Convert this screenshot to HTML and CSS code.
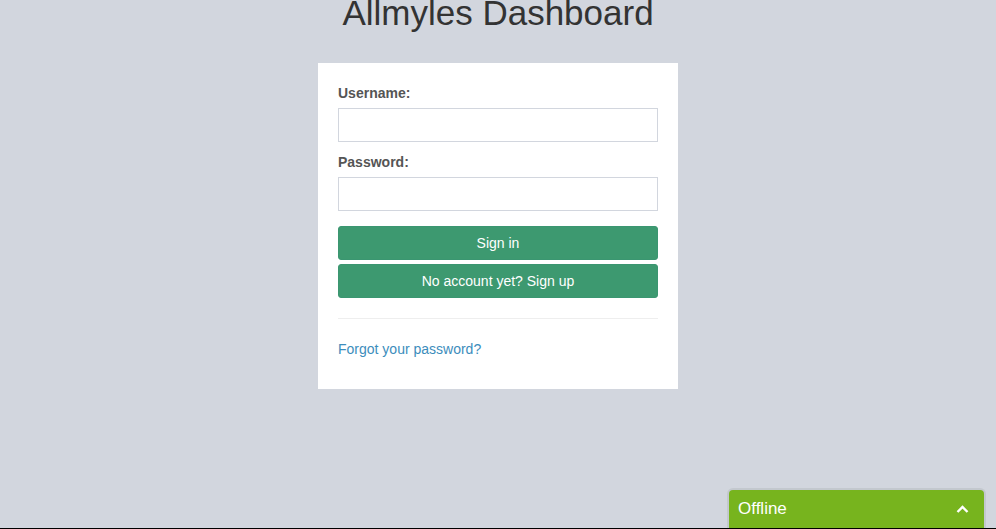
FILE: index.html
```html
<!DOCTYPE html>
<html>
<head lang="en">
  <meta charset="UTF-8">
  <title>Allmyles Dashboard</title>
  <link rel="stylesheet" href="styles.css">
</head>
<body>

<div class="login-box">
  <!-- 标题 -->
  <div class="login-logo">Allmyles Dashboard</div>
  <!-- 登录框 -->
  <div class="login-body">
    <form>
      <div class="form-group">
        <label for="username">Username:</label>
        <input type="text" id="username" class="form-control">
      </div>
      <div class="form-group">
        <label for="password">Password:</label>
        <input type="password" id="password" class="form-control">
      </div>
      <div class="actions">
        <button type="button" class="btn">Sign in</button>
        <button type="button" class="btn">No account yet? Sign up</button>
      </div>
    </form>
    <hr>
    <p><a href="#">Forgot your password?</a></p>
  </div>
</div>

<!-- 右下角聊天窗口 -->
<div class="chat">
  <span>Offline</span>
  <svg width="13" height="9" viewBox="0 0 13 9">
    <path d="M1.5 7 L6.5 2 L11.5 7" fill="none" stroke="#fff" stroke-width="2.4"/>
  </svg>
</div>
<div class="bottom-line"></div>

</body>
</html>
```

FILE: styles.css
```css
* {
  margin: 0;
  padding: 0;
  box-sizing: border-box;
}

body, html {
  width: 100%;
  height: 100%;
}

body {
  background: #d2d6de;
  font-family: "Liberation Sans", Arial, sans-serif;
  font-size: 14px;
  line-height: 20px;
  color: #333;
  overflow: hidden;
}

.login-box {
  width: 360px;
  margin: -12px auto 0;
}

.login-logo {
  font-size: 35px;
  line-height: 50px;
  text-align: center;
  color: #333;
  margin-bottom: 25px;
}

.login-body {
  background: #fff;
  padding: 20px;
}

.form-group {
  margin-bottom: 10px;
}

label {
  display: block;
  font-weight: bold;
  color: #555;
  margin-bottom: 5px;
}

.form-control {
  display: block;
  width: 100%;
  height: 34px;
  border: 1px solid #d2d6de;
  padding: 6px 12px;
  font-size: 14px;
  outline: none;
}

.actions {
  padding-top: 5px;
  display: flex;
  flex-direction: column;
  gap: 4px;
}

.btn {
  display: block;
  width: 100%;
  height: 34px;
  border: 1px solid #3b9671;
  border-radius: 3px;
  background: #3d9970;
  color: #fff;
  font-family: inherit;
  font-size: 14px;
  line-height: 18px;
}

hr {
  border: 0;
  border-top: 1px solid #eee;
  margin: 20px 0;
}

p {
  margin-bottom: 10px;
}

a {
  color: #3c8dbc;
  text-decoration: none;
}

.chat {
  position: fixed;
  right: 10px;
  bottom: 1px;
  width: 259px;
  height: 40px;
  background: #77b41e;
  border: 2px solid #c3c8ce;
  border-bottom: 0;
  border-radius: 6px 6px 0 0;
  display: flex;
  align-items: center;
  justify-content: space-between;
  padding: 0 15px 0 9px;
  color: #fff;
  font-size: 17px;
}

.bottom-line {
  position: fixed;
  left: 0;
  right: 0;
  bottom: 0;
  height: 1px;
  background: #000;
}
```
